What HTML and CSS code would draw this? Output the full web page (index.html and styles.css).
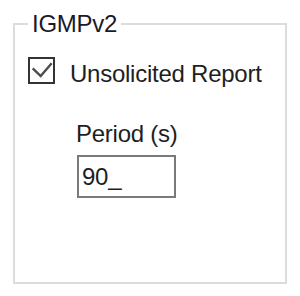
FILE: index.html
```html
<!DOCTYPE html>
<html>
<head>
<meta charset="utf-8">
<link rel="stylesheet" href="styles.css">
</head>
<body>
<fieldset class="group">
  <legend class="group-title">IGMPv2</legend>
  <div class="check-row">
    <svg class="checkbox" width="27" height="27" viewBox="0 0 27 27">
      <rect x="1" y="1" width="25" height="25" fill="#fff" stroke="#333" stroke-width="2"/>
      <polyline points="4.7,11.3 12.7,19 23.7,6.3" fill="none" stroke="#4d4d4d" stroke-width="2.4"/>
    </svg>
    <span class="check-label">Unsolicited Report</span>
  </div>
  <div class="field-label">Period (s)</div>
  <div class="text-input">90_</div>
</fieldset>
</body>
</html>
```

FILE: styles.css
```css
html, body {
  margin: 0;
  padding: 0;
  background: #fff;
}
body {
  font-family: "Liberation Sans", Arial, sans-serif;
  font-size: 24px;
  letter-spacing: -0.25px;
  color: #1e1e1e;
  width: 300px;
  height: 296px;
  overflow: hidden;
}
.group {
  box-sizing: border-box;
  margin: 10px 0 0 13px;
  width: 274px;
  height: 274px;
  border: 2px solid #dcdcdc;
  padding: 0 13px;
  min-width: 0;
}
.group-title {
  padding: 0 4px;
  line-height: 28px;
  font-size: 24px;
  color: #1a1a2a;
}
.check-row {
  display: flex;
  align-items: flex-start;
  margin-top: 19px;
}
.checkbox {
  display: block;
  flex: none;
}
.check-label {
  margin-left: 15px;
  padding-top: 3px;
  line-height: 28px;
}
.field-label {
  margin-top: 32px;
  margin-left: 48px;
  line-height: 28px;
}
.text-input {
  box-sizing: border-box;
  margin-top: 7px;
  margin-left: 49px;
  width: 99px;
  height: 43px;
  border: 2px solid #7a7a7a;
  padding-left: 3px;
  line-height: 39px;
}
```
